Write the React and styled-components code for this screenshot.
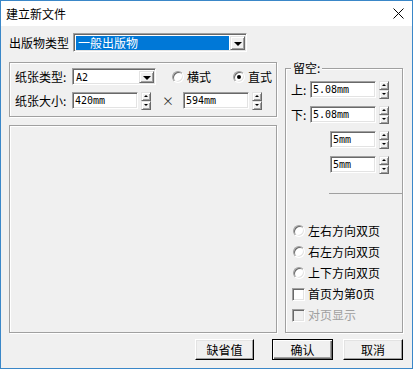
import styled, { createGlobalStyle } from "styled-components";

const GlobalStyle = createGlobalStyle`
  html, body {
    margin: 0;
    padding: 0;
    background: #f0f0f0;
  }
  body {
    font-family: "Noto Sans CJK SC", "Noto Sans", sans-serif;
    font-size: 12px;
    color: #000;
  }
`;

function App() {
    return (
        <>
            <GlobalStyle />
            <Window>
                <TitleBar>
                    <Title>建立新文件</Title>
                    <svg width="11" height="11" viewBox="0 0 11 11">
                        <path d="M0.5 0.5 L10.5 10.5 M10.5 0.5 L0.5 10.5" stroke="#000" strokeWidth="1" />
                    </svg>
                </TitleBar>
                <Body>
                    <Main>
                        <LeftColumn>
                            <TypeRow>
                                <Label $w={64}>出版物类型</Label>
                                <Combo $w={174} $h={19}>
                                    <Selected>一般出版物</Selected>
                                    <DropButton $w={15}>
                                        <DownArrow />
                                    </DropButton>
                                </Combo>
                            </TypeRow>
                            <PaperGroup>
                                <Row>
                                    <Label $w={57}>纸张类型:</Label>
                                    <Combo $w={84} $h={17}>
                                        <ComboText>A2</ComboText>
                                        <DropButton $w={15}>
                                            <DownArrow />
                                        </DropButton>
                                    </Combo>
                                    <Option style={{ marginLeft: 16 }}>
                                        <Radio />
                                        横式
                                    </Option>
                                    <Option style={{ marginLeft: 22 }}>
                                        <Radio $checked />
                                        直式
                                    </Option>
                                </Row>
                                <Row>
                                    <Label $w={57}>纸张大小:</Label>
                                    <Field $w={66}>420mm</Field>
                                    <Spin />
                                    <Times>×</Times>
                                    <Field $w={66}>594mm</Field>
                                    <Spin />
                                </Row>
                            </PaperGroup>
                            <Preview />
                        </LeftColumn>
                        <MarginGroup>
                            <Legend>留空:</Legend>
                            <MarginRows>
                                <Row>
                                    <Label $w={19}>上:</Label>
                                    <Field $w={66}>5.08mm</Field>
                                    <Spin />
                                </Row>
                                <Row>
                                    <Label $w={19}>下:</Label>
                                    <Field $w={66}>5.08mm</Field>
                                    <Spin />
                                </Row>
                                <Row $end>
                                    <Field $w={46}>5mm</Field>
                                    <Spin />
                                </Row>
                                <Row $end>
                                    <Field $w={46}>5mm</Field>
                                    <Spin />
                                </Row>
                            </MarginRows>
                            <Rule />
                            <Choices>
                                <Option $indent={2}>
                                    <Radio />
                                    左右方向双页
                                </Option>
                                <Option $indent={2}>
                                    <Radio />
                                    右左方向双页
                                </Option>
                                <Option $indent={2}>
                                    <Radio />
                                    上下方向双页
                                </Option>
                                <Option $indent={1}>
                                    <Check />
                                    首页为第0页
                                </Option>
                                <Option $indent={1} $disabled>
                                    <Check $disabled />
                                    对页显示
                                </Option>
                            </Choices>
                        </MarginGroup>
                    </Main>
                    <Buttons>
                        <Button $w={59}>缺省值</Button>
                        <Button $w={61} $default style={{ marginLeft: 18 }}>确认</Button>
                        <Button $w={60} style={{ marginLeft: 10 }}>取消</Button>
                    </Buttons>
                </Body>
            </Window>
        </>
    );
}

function Spin() {
    return (
        <SpinBox>
            <SpinHalf>
                <UpArrow />
            </SpinHalf>
            <SpinHalf>
                <SmallDown />
            </SpinHalf>
        </SpinBox>
    );
}

export default App;

// 창 틀
const Window = styled.div`
    width: 413px;
    height: 369px;
    box-sizing: border-box;
    border: 1px solid #3a87c8;
    background: #f0f0f0;
    display: flex;
    flex-direction: column;
`;

const TitleBar = styled.div`
    height: 25px;
    flex: none;
    background: #fff;
    display: flex;
    align-items: center;
    justify-content: space-between;
    padding: 0 8px 0 5px;
`;

const Title = styled.div`
    font-size: 12px;
    line-height: 14px;
`;

const Body = styled.div`
    display: flex;
    flex-direction: column;
    padding-left: 8px;
`;

const Main = styled.div`
    display: flex;
    gap: 8px;
    height: 307px;
`;

const LeftColumn = styled.div`
    width: 268px;
    display: flex;
    flex-direction: column;
`;

const TypeRow = styled.div`
    display: flex;
    align-items: center;
    margin-top: 7px;
    height: 19px;
`;

const Label = styled.div`
    width: ${({ $w }) => $w}px;
    flex: none;
    line-height: 14px;
    white-space: nowrap;
`;

const sunken = `
    box-sizing: border-box;
    background: #fff;
    border-top: 1px solid #a0a0a0;
    border-left: 1px solid #a0a0a0;
    border-right: 1px solid #fff;
    border-bottom: 1px solid #fff;
    box-shadow: inset 1px 1px 0 #696969, inset -1px -1px 0 #e3e3e3;
`;

const raised = `
    box-sizing: border-box;
    background: #f0f0f0;
    border-top: 1px solid #e3e3e3;
    border-left: 1px solid #e3e3e3;
    border-right: 1px solid #696969;
    border-bottom: 1px solid #696969;
    box-shadow: inset 1px 1px 0 #fff, inset -1px -1px 0 #a0a0a0;
`;

const mono = `
    font-family: "DejaVu Sans Mono", monospace;
    font-size: 10px;
`;

const Combo = styled.div`
    ${sunken}
    width: ${({ $w }) => $w}px;
    height: ${({ $h }) => $h}px;
    display: flex;
    align-items: stretch;
    padding: 2px 1px 1px 2px;
`;

const Selected = styled.div`
    flex: 1;
    margin-right: 1px;
    background: #0078d7;
    color: #fff;
    line-height: 14px;
    padding-left: 2px;
    font-size: 12px;
`;

const ComboText = styled.div`
    ${mono}
    flex: 1;
    line-height: 13px;
    padding-left: 1px;
`;

const DropButton = styled.div`
    ${raised}
    width: ${({ $w }) => $w}px;
    display: flex;
    align-items: center;
    justify-content: center;
`;

const DownArrow = styled.div`
    width: 0;
    height: 0;
    border-left: 4px solid transparent;
    border-right: 4px solid transparent;
    border-top: 4px solid #000;
    margin-top: 1px;
`;

const PaperGroup = styled.div`
    box-sizing: border-box;
    margin-top: 10px;
    height: 55px;
    border: 1px solid #a0a0a0;
    box-shadow: inset 1px 1px 0 #fff, 1px 1px 0 #fff;
    padding: 5px 0 0 5px;
    display: flex;
    flex-direction: column;
    gap: 7px;
`;

const Row = styled.div`
    display: flex;
    align-items: center;
    height: 17px;
    justify-content: ${({ $end }) => ($end ? "flex-end" : "flex-start")};
`;

const Option = styled.div`
    display: flex;
    align-items: center;
    gap: 3px;
    line-height: 14px;
    height: 14px;
    margin-left: ${({ $indent }) => $indent || 0}px;
    color: ${({ $disabled }) => ($disabled ? "#a0a0a0" : "#000")};
`;

const Radio = styled.span`
    box-sizing: border-box;
    width: 12px;
    height: 12px;
    border-radius: 50%;
    background: #fff;
    border-top: 1px solid #a0a0a0;
    border-left: 1px solid #a0a0a0;
    border-right: 1px solid #fff;
    border-bottom: 1px solid #fff;
    box-shadow: inset 1px 1px 0 #696969, inset -1px -1px 0 #e3e3e3;
    display: flex;
    align-items: center;
    justify-content: center;
    &::after {
        content: "";
        width: 4px;
        height: 4px;
        border-radius: 50%;
        background: #000;
        display: ${({ $checked }) => ($checked ? "block" : "none")};
    }
`;

const Check = styled.span`
    ${sunken}
    width: 13px;
    height: 13px;
    background: ${({ $disabled }) => ($disabled ? "#f0f0f0" : "#fff")};
`;

const Field = styled.div`
    ${sunken}
    ${mono}
    width: ${({ $w }) => $w}px;
    height: 17px;
    line-height: 15px;
    padding-left: 2px;
`;

const SpinBox = styled.div`
    width: 10px;
    height: 18px;
    margin-left: 3px;
    display: flex;
    flex-direction: column;
`;

const SpinHalf = styled.div`
    ${raised}
    flex: 1;
    display: flex;
    align-items: center;
    justify-content: center;
`;

const UpArrow = styled.div`
    width: 0;
    height: 0;
    border-left: 2px solid transparent;
    border-right: 2px solid transparent;
    border-bottom: 2px solid #000;
`;

const SmallDown = styled.div`
    width: 0;
    height: 0;
    border-left: 2px solid transparent;
    border-right: 2px solid transparent;
    border-top: 2px solid #000;
`;

const Times = styled.div`
    width: 21px;
    margin-left: 11px;
    color: #333;
    line-height: 14px;
`;

const Preview = styled.div`
    box-sizing: border-box;
    margin-top: 8px;
    height: 208px;
    border: 1px solid #a0a0a0;
    box-shadow: inset 1px 1px 0 #fff, 1px 1px 0 #fff;
`;

const MarginGroup = styled.div`
    position: relative;
    box-sizing: border-box;
    width: 118px;
    margin-top: 42px;
    height: 265px;
    border: 1px solid #a0a0a0;
    box-shadow: inset 1px 1px 0 #fff, 1px 1px 0 #fff;
    padding: 12px 13px 0 5px;
    display: flex;
    flex-direction: column;
`;

const Legend = styled.div`
    position: absolute;
    top: -8px;
    left: 5px;
    padding: 0 2px;
    background: #f0f0f0;
    line-height: 14px;
`;

const MarginRows = styled.div`
    display: flex;
    flex-direction: column;
    gap: 8px;
`;

const Rule = styled.div`
    width: 73px;
    height: 1px;
    margin: 20px -13px 0 auto;
    background: #a0a0a0;
`;

const Choices = styled.div`
    display: flex;
    flex-direction: column;
    gap: 7px;
    margin-top: 30px;
`;

const Buttons = styled.div`
    display: flex;
    justify-content: flex-end;
    padding-right: 9px;
    margin-top: 6px;
`;

const Button = styled.div`
    box-sizing: border-box;
    width: ${({ $w }) => $w}px;
    height: 21px;
    background: #f0f0f0;
    border: 1px solid ${({ $default }) => ($default ? "#000" : "#fff")};
    border-right-color: #000;
    border-bottom-color: #000;
    box-shadow: ${({ $default }) =>
        $default
            ? "inset 1px 1px 0 #fff, inset -1px -1px 0 #696969, inset -2px -2px 0 #a0a0a0"
            : "inset -1px -1px 0 #a0a0a0, inset 1px 1px 0 #e3e3e3"};
    display: flex;
    align-items: center;
    justify-content: center;
    line-height: 14px;
`;
